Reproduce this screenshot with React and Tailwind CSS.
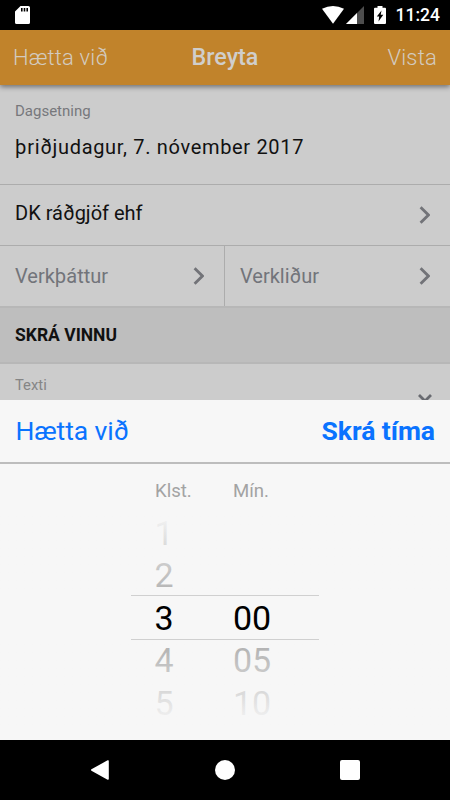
const hours = ["1", "2", "3", "4", "5"];
const minutes = ["", "", "00", "05", "10"];

export default function App() {
  return (
    <main className="flex h-[800px] w-[450px] flex-col overflow-hidden bg-black font-['Roboto',sans-serif]">
      <StatusBar />
      <div className="flex h-[370px] flex-col overflow-hidden bg-[#cccccc]">
        <Header />
        <Form />
      </div>
      <Sheet />
      <NavBar />
    </main>
  );
}

function StatusBar() {
  return (
    <div className="flex h-[30px] shrink-0 items-center bg-black pl-[15px] pr-[10px] text-white">
      <svg width="15" height="18" viewBox="0 0 15 18">
        <path
          fill="white"
          fillRule="evenodd"
          d="M5.5 0H13.4Q15 0 15 1.6V16.4Q15 18 13.4 18H1.6Q0 18 0 16.4V5.5ZM6 2V5.5H7.6V2ZM8.7 2V5.5H10.3V2ZM11.4 2V5.5H13V2Z"
        />
      </svg>
      <svg
        width="65"
        height="18"
        viewBox="0 0 65 18"
        className="ml-auto"
        fill="white"
      >
        <path d="M0 2.8Q11-2.8 22 2.8L11 17.8Z" />
        <path d="M42 0V18H24Z" fillOpacity="0.3" />
        <path d="M35 7V18H24Z" />
        <path
          fillRule="evenodd"
          d="M55.5 0H60.5V1.7H63Q64 1.7 64 2.7V17Q64 18 63 18H53Q52 18 52 17V2.7Q52 1.7 53 1.7H55.5ZM59.5 4.5L54.8 10.5H57.2L56.5 15.5L61.3 8.8H58.7Z"
        />
      </svg>
      <span className="ml-[8px] w-[45px] text-right text-[17.5px] font-medium leading-[32px]">
        11:24
      </span>
    </div>
  );
}

function Header() {
  return (
    <div className="z-10 grid h-[55px] shrink-0 grid-cols-3 items-center bg-[#c1832b] px-[13px] text-[22px] font-light leading-[55px] text-[#d3cbc0] shadow-[0_2px_5px_rgba(0,0,0,0.45)]">
      <span className="tracking-[0.15px]">Hætta við</span>
      <span className="text-center text-[23.3px] font-medium text-[#d0cecb]">
        Breyta
      </span>
      <span className="text-right tracking-[0.2px]">Vista</span>
    </div>
  );
}

function Form() {
  return (
    <>
      <div className="h-[100px] shrink-0 border-b border-[#acacac] px-[15px] pt-[16px]">
        <div className="text-[15px] leading-[20px] text-[#77787c]">
          Dagsetning
        </div>
        <div className="mt-[13px] text-[20px] leading-[26px] tracking-[0.67px] text-[#111]">
          þriðjudagur, 7. nóvember 2017
        </div>
      </div>
      <div className="flex h-[61px] shrink-0 items-center justify-between border-b border-[#acacac] pl-[15px] pr-[20px] text-[20px] text-[#111]">
        <span className="-mt-[4px]">DK ráðgjöf ehf</span>
        <Chevron />
      </div>
      <div className="grid h-[60px] shrink-0 grid-cols-2 text-[20px] text-[#72747a]">
        <div className="flex items-center justify-between border-r border-[#acacac] pl-[15px] pr-[20px]">
          <span>Verkþáttur</span>
          <Chevron />
        </div>
        <div className="flex items-center justify-between pl-[15px] pr-[20px]">
          <span>Verkliður</span>
          <Chevron />
        </div>
      </div>
      <div className="h-[58px] shrink-0 border-y-2 border-[#b7b7b7] bg-[#bebebe] pl-[15px] text-[17.5px] font-bold leading-[54px] text-[#111]">
        SKRÁ VINNU
      </div>
      <div className="flex justify-between pl-[15px] pr-[17px] pt-[11px] text-[14.8px] leading-[20px] text-[#858585]">
        <span>Texti</span>
        <svg width="16" height="10" viewBox="0 0 16 10" className="mt-[18px]">
          <path
            d="M2 2L8 8L14 2"
            fill="none"
            stroke="#686a70"
            strokeWidth="2.8"
          />
        </svg>
      </div>
    </>
  );
}

function Chevron() {
  return (
    <svg width="11" height="18" viewBox="0 0 11 18">
      <path
        d="M1.6 1.2L9.4 9L1.6 16.8"
        fill="none"
        stroke="#727378"
        strokeWidth="2.8"
      />
    </svg>
  );
}

function Sheet() {
  return (
    <div className="flex h-[340px] shrink-0 flex-col bg-[#f7f7f7]">
      <div className="flex h-[64px] justify-between border-b-2 border-[#bdbdbd] pl-[15.5px] pr-[15px] text-[26.5px] leading-[61px] text-[#0a73ff]">
        <span className="tracking-[-0.1px]">Hætta við</span>
        <span className="font-bold tracking-[-0.05px]">Skrá tíma</span>
      </div>
      <div className="flex pl-[155px] pt-[15px] text-[18.6px] leading-[24px] text-[#a3a3a3]">
        <span className="w-[78px]">Klst.</span>
        <span>Mín.</span>
      </div>
      <div className="relative mt-[9px] flex pl-[154.5px]">
        <Column values={hours} />
        <Column values={minutes} />
        <div className="absolute left-[131px] top-[83px] h-[45px] w-[188px] border-y border-[#d0d0d0]" />
        {/* fades on both ends of the wheel */}
        <div className="absolute inset-x-0 top-0 h-[83px] bg-linear-to-b from-[#f7f7f7] to-[#f7f7f7]/72" />
        <div className="absolute inset-x-0 top-[128px] h-[86px] bg-linear-to-t from-[#f7f7f7] to-[#f7f7f7]/70" />
      </div>
    </div>
  );
}

function Column({ values }) {
  return (
    <div className="-mt-[0.5px] w-[78.5px] text-[34px] leading-[42.5px] text-black">
      {values.map((value, i) => (
        <div key={i} className="h-[42.5px]">
          {value}
        </div>
      ))}
    </div>
  );
}

function NavBar() {
  return (
    <div className="flex h-[60px] shrink-0 items-center justify-between bg-black px-[90px]">
      <svg width="20" height="20" viewBox="0 0 20 20">
        <path
          d="M1.8 10L18 1V19Z"
          fill="white"
          stroke="white"
          strokeWidth="1.6"
          strokeLinejoin="round"
        />
      </svg>
      <div className="size-[20px] rounded-full bg-white" />
      <div className="size-[20px] rounded-[2px] bg-white" />
    </div>
  );
}
